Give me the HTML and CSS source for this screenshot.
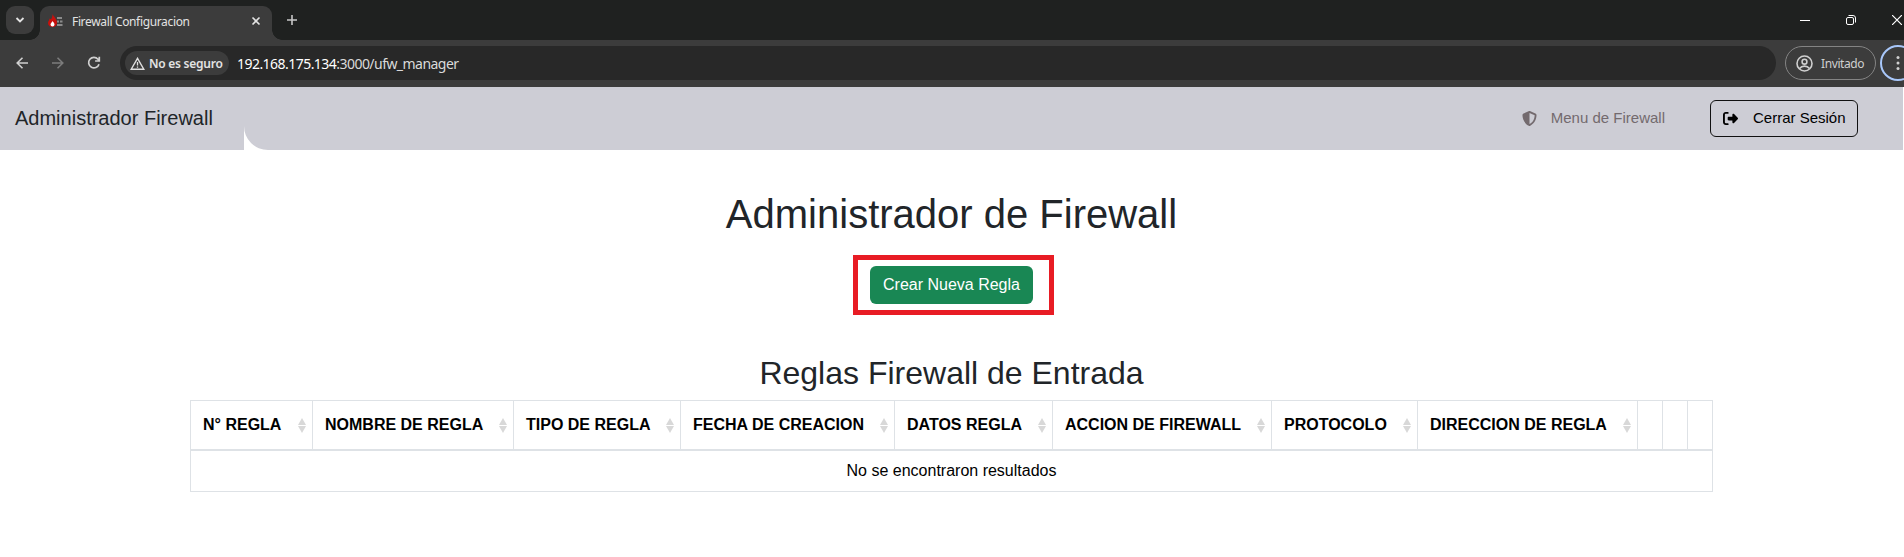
FILE: index.html
```html
<!DOCTYPE html>
<html lang="es">
<head>
<meta charset="utf-8">
<title>Firewall Configuracion</title>
<link rel="stylesheet" href="styles.css">
</head>
<body>
<div class="tabstrip">
  <div class="tab-search"><svg width="10" height="8" viewBox="0 0 10 8"><path d="M1.5 2l3.5 3.5L8.500 2" fill="none" stroke="#e3e3e3" stroke-width="1.8"/></svg></div>
  <div class="tab">
    <svg class="favicon" width="16" height="16" viewBox="0 0 16 16">
      <path d="M9 4h5v2h-5zM9 7.500h2v2h-2zM12 7.500h2.500v2h-2.500zM9 11h5.500v2h-5.500z" fill="#8b8b8b"/>
      <path d="M4.500 1c1 2.500 4.500 5 4.500 8.500 0 3-2 4.500-4.500 4.500S0 12.500 0 10c0-2 1.500-2.500 1.500-4.500l1.500 1c1-1.500 1.500-3.500 1.500-5.500z" fill="#c8100c"/>
      <path d="M4.500 8c1 1.500 2 2.200 2 3.700A2 2 0 0 1 4.500 13.500 2 2 0 0 1 2.500 11.700C2.500 10.200 4 9.500 4.500 8z" fill="#fff"/>
    </svg>
    <span class="tab-title">Firewall Configuracion</span>
    <svg class="tab-close" width="10" height="10" viewBox="0 0 10 10"><path d="M1.500 1.500l7 7M8.500 1.500l-7 7" stroke="#e3e3e3" stroke-width="1.600"/></svg>
  </div>
  <svg class="new-tab" width="12" height="12" viewBox="0 0 12 12"><path d="M6 1v10M1 6h10" stroke="#c7c7c7" stroke-width="1.600"/></svg>
  <div class="window-controls">
    <svg width="10" height="12" viewBox="0 0 10 12"><path d="M0 6.500h10" stroke="#fff"/></svg>
    <svg width="10" height="10" viewBox="0 0 10 10"><rect x=".5" y="2.500" width="7" height="7" rx="1.500" fill="none" stroke="#fff"/><path d="M2.500.5H7A2.500 2.500 0 0 1 9.500 3v4.500" fill="none" stroke="#fff"/></svg>
    <svg width="10" height="10" viewBox="0 0 10 10"><path d="M0 0l10 10M10 0L0 10" stroke="#fff" stroke-width="1.200"/></svg>
  </div>
</div>
<div class="toolbar">
  <svg class="tool" width="12" height="12" viewBox="0 0 12 12"><path d="M12 6H1M6.500.7L1.200 6l5.300 5.300" fill="none" stroke="#d0d0d0" stroke-width="1.600"/></svg>
  <svg class="tool" width="12" height="12" viewBox="0 0 12 12"><path d="M0 6h11M5.500.7L10.800 6l-5.300 5.300" fill="none" stroke="#7c7c7c" stroke-width="1.600"/></svg>
  <svg class="tool reload" width="14" height="14" viewBox="0 0 14 14"><path d="M12 8.200A5.300 5.300 0 1 1 11 3.200L12.200 4.600M12.300.8v4.200H8.100" fill="none" stroke="#d0d0d0" stroke-width="1.700"/></svg>
  <div class="omnibox">
    <div class="chip">
      <svg width="15" height="13" viewBox="0 0 15 13"><path d="M7.500 1.300L1.200 12.200h12.600z" fill="none" stroke="#dedede" stroke-width="1.400"/><path d="M7.500 5v3.500M7.500 9.400v1.400" stroke="#dedede" stroke-width="1.300"/></svg>
      <span class="chip-text">No es seguro</span>
    </div>
    <span class="url">192.168.175.134<span class="url-path">:3000/ufw_manager</span></span>
  </div>
  <div class="profile">
    <svg width="17" height="17" viewBox="0 0 17 17" fill="none" stroke="#cfcfcf" stroke-width="1.600"><circle cx="8.500" cy="8.500" r="7.500"/><circle cx="8.500" cy="6.700" r="2.400"/><path d="M3.500 13.500c2.500-3.200 7.500-3.200 10 0"/></svg>
    <span class="profile-name">Invitado</span>
  </div>
  <div class="menu"><svg width="4" height="16" viewBox="0 0 4 16" fill="#d0d0d0"><circle cx="2" cy="2.500" r="1.500"/><circle cx="2" cy="8" r="1.500"/><circle cx="2" cy="13.500" r="1.500"/></svg></div>
</div>
<nav class="navbar">
  <span class="brand">Administrador Firewall</span>
  <svg class="notch" width="24" height="24" viewBox="0 0 24 24"><path d="M0 0A24 24 0 0 0 24 24H0z" fill="#fff"/></svg>
  <a class="nav-link">
    <svg width="15" height="15" viewBox="0 0 512 512"><path fill="#736a6e" d="M256 0c4.600 0 9.200 1 13.400 2.900L457.700 82.800c22 9.300 38.400 31 38.300 57.200-.5 99.200-41.300 280.700-213.600 363.200-16.700 8-36.100 8-52.800 0C57.300 420.700 16.500 239.200 16 140c-.1-26.200 16.300-47.900 38.300-57.200L242.700 2.900C246.800 1 251.400 0 256 0zm0 66.800V444.800C394 378 431.100 230.100 432 141.400L256 66.800z"/></svg>
    <span class="nav-label">Menu de Firewall</span>
  </a>
  <a class="logout">
    <svg width="15" height="15" viewBox="0 0 512 512"><path d="M377.900 105.900L500.700 228.700c7.200 7.200 11.300 17.100 11.300 27.300s-4.100 20.100-11.300 27.300L377.900 406.100c-6.400 6.400-15 9.900-24 9.900-18.700 0-33.900-15.200-33.900-33.900V320H192c-17.700 0-32-14.300-32-32v-64c0-17.700 14.300-32 32-32h128v-62.100c0-18.700 15.200-33.900 33.900-33.900 9 0 17.600 3.600 24 9.900zM160 96H96c-17.700 0-32 14.300-32 32v256c0 17.700 14.300 32 32 32h64c17.700 0 32 14.300 32 32s-14.300 32-32 32H96c-53 0-96-43-96-96V128C0 75 43 32 96 32h64c17.700 0 32 14.300 32 32s-14.300 32-32 32z"/></svg>
    <span class="nav-label">Cerrar Sesión</span>
  </a>
</nav>
<main class="page">
  <h1 class="title">Administrador de Firewall</h1>
  <div class="highlight"><button class="create">Crear Nueva Regla</button></div>
  <h2 class="subtitle">Reglas Firewall de Entrada</h2>
  <table class="rules">
    <colgroup><col class="c-num"><col class="c-name"><col class="c-type"><col class="c-date"><col class="c-data"><col class="c-action"><col class="c-proto"><col class="c-dir"><col class="c-tool"><col class="c-tool"><col class="c-last"></colgroup>
    <thead><tr>
      <th><span class="head">N° REGLA<i class="sort"></i></span></th>
      <th><span class="head">NOMBRE DE REGLA<i class="sort"></i></span></th>
      <th><span class="head">TIPO DE REGLA<i class="sort"></i></span></th>
      <th><span class="head">FECHA DE CREACION<i class="sort"></i></span></th>
      <th><span class="head">DATOS REGLA<i class="sort"></i></span></th>
      <th><span class="head">ACCION DE FIREWALL<i class="sort"></i></span></th>
      <th><span class="head">PROTOCOLO<i class="sort"></i></span></th>
      <th><span class="head">DIRECCION DE REGLA<i class="sort"></i></span></th>
      <th></th><th></th><th></th>
    </tr></thead>
    <tbody><tr><td colspan="11">No se encontraron resultados</td></tr></tbody>
  </table>
</main>
</body>
</html>
```
FILE: styles.css
```css
* { box-sizing: border-box; }
body { margin: 0; height: 557px; overflow: hidden; background: #fff; color: #212529; font-family: "Liberation Sans", Arial, sans-serif; font-size: 16px; }
svg { display: block; flex: none; }

/* Browser chrome */
.tabstrip, .toolbar { display: flex; font-family: "Noto Sans", "Open Sans", sans-serif; white-space: nowrap; overflow: hidden; }
.tabstrip { height: 40px; background: #1f2120; }
.tab-search { width: 28px; height: 28px; margin: 6px 6px 0; border-radius: 9px; background: #3c3c3c; display: flex; align-items: center; justify-content: center; }
.tab { position: relative; width: 232px; height: 34px; margin-top: 6px; padding: 0 11px 4px 8px; border-radius: 9px 9px 0 0; background: #3c3c3c; display: flex; align-items: center; }
.tab::before, .tab::after { content: ""; position: absolute; bottom: 0; width: 10px; height: 10px; }
.tab::before { left: -10px; background: radial-gradient(circle at 0 0, transparent 9.5px, #3c3c3c 10px); }
.tab::after { right: -10px; background: radial-gradient(circle at 100% 0, transparent 9.5px, #3c3c3c 10px); }
.favicon { margin-right: 8px; }
.tab-title { flex: 1; font-size: 12px; letter-spacing: -0.35px; color: #e3e3e3; }
.new-tab { margin: 14px 0 0 14px; }
.window-controls { display: flex; align-items: center; gap: 36px; margin-left: auto; margin-right: 2px; padding-bottom: 1px; }
.toolbar { height: 47px; align-items: center; padding: 0 0 1px 16px; background: #3c3c3c; }
.tool { margin-right: 24px; }
.tool + .tool { margin-right: 23px; }
.tool + .reload { margin-right: 19px; }
.omnibox { flex: none; width: 1656px; height: 34px; padding-left: 5px; border-radius: 17px; background: #282828; display: flex; align-items: center; }
.chip { flex: none; width: 104px; height: 24px; padding-left: 5px; border-radius: 12px; background: #3c3c3c; display: flex; align-items: center; gap: 4px; }
.chip-text { font-size: 12px; font-weight: 600; color: #e3e3e3; letter-spacing: -0.25px; }
.url { margin-left: 8px; font-size: 14px; letter-spacing: -0.54px; color: #fff; }
.url-path { color: #dadada; }
.profile { flex: none; width: 91px; height: 34px; margin-left: 9px; padding-left: 10px; border: 1px solid #848484; border-radius: 17px; display: flex; align-items: center; gap: 8px; }
.profile-name { font-size: 12px; letter-spacing: -0.4px; color: #cfcfcf; }
.menu { flex: none; width: 36px; height: 36px; margin-left: 4px; border: 2px solid #a8c7fa; border-radius: 50%; display: flex; align-items: center; justify-content: center; }

/* Page navigation */
.navbar { height: 63px; width: 1903px; padding-left: 15px; background: #cdcdd5; display: flex; align-items: center; white-space: nowrap; }
.brand { width: 229px; font-size: 20px; }
.notch { align-self: flex-end; }
.nav-link, .logout { display: flex; align-items: center; font-size: 15px; }
.nav-label { padding-bottom: 1px; }
.nav-link { margin-left: auto; margin-right: 45px; padding-bottom: 1px; gap: 14px; color: #736a6e; }
.logout { width: 148px; height: 37px; margin-right: 45px; padding: 0 0 1px 12px; gap: 15px; border: 1px solid #111; border-radius: 6px; color: #000; }

/* Rules page */
.page { width: 1903px; display: flex; flex-direction: column; align-items: center; }
.title { margin: 40px 0 0; font-size: 40px; line-height: 48px; font-weight: 400; }
.highlight { width: 201px; height: 60px; margin: 17px 0 0 4px; padding: 6px 0 0 12px; border: 5px solid #e81c24; }
.create { display: block; width: 163px; height: 38px; padding: 0; border: 0; border-radius: 6px; background: #198754; color: #fff; font: 16px "Liberation Sans", Arial, sans-serif; }
.subtitle { margin: 39px 0 8px; font-size: 32px; line-height: 38px; font-weight: 400; }
.rules { width: 1523px; table-layout: fixed; border-collapse: separate; border-spacing: 0; border: 1px solid #dee2e6; border-left: 0; color: #000; }
th, td { border-left: 1px solid #dee2e6; white-space: nowrap; }
th { height: 50px; padding: 0 6px 0 12px; border-bottom: 2px solid #dee2e6; text-align: left; }
td { height: 40px; padding: 0; text-align: center; }
.head { display: flex; justify-content: space-between; align-items: center; }
.sort { width: 8px; height: 15px; display: flex; flex-direction: column; justify-content: space-between; }
.sort::before, .sort::after { content: ""; border-left: 4px solid transparent; border-right: 4px solid transparent; }
.sort::before { border-bottom: 7px solid #d8d8d8; }
.sort::after { border-top: 7px solid #d8d8d8; }
.c-num { width: 122px; }
.c-name { width: 201px; }
.c-type { width: 167px; }
.c-date { width: 214px; }
.c-data { width: 158px; }
.c-action { width: 219px; }
.c-proto { width: 146px; }
.c-dir { width: 220px; }
.c-tool { width: 25px; }
.c-last { width: 25px; }
```
